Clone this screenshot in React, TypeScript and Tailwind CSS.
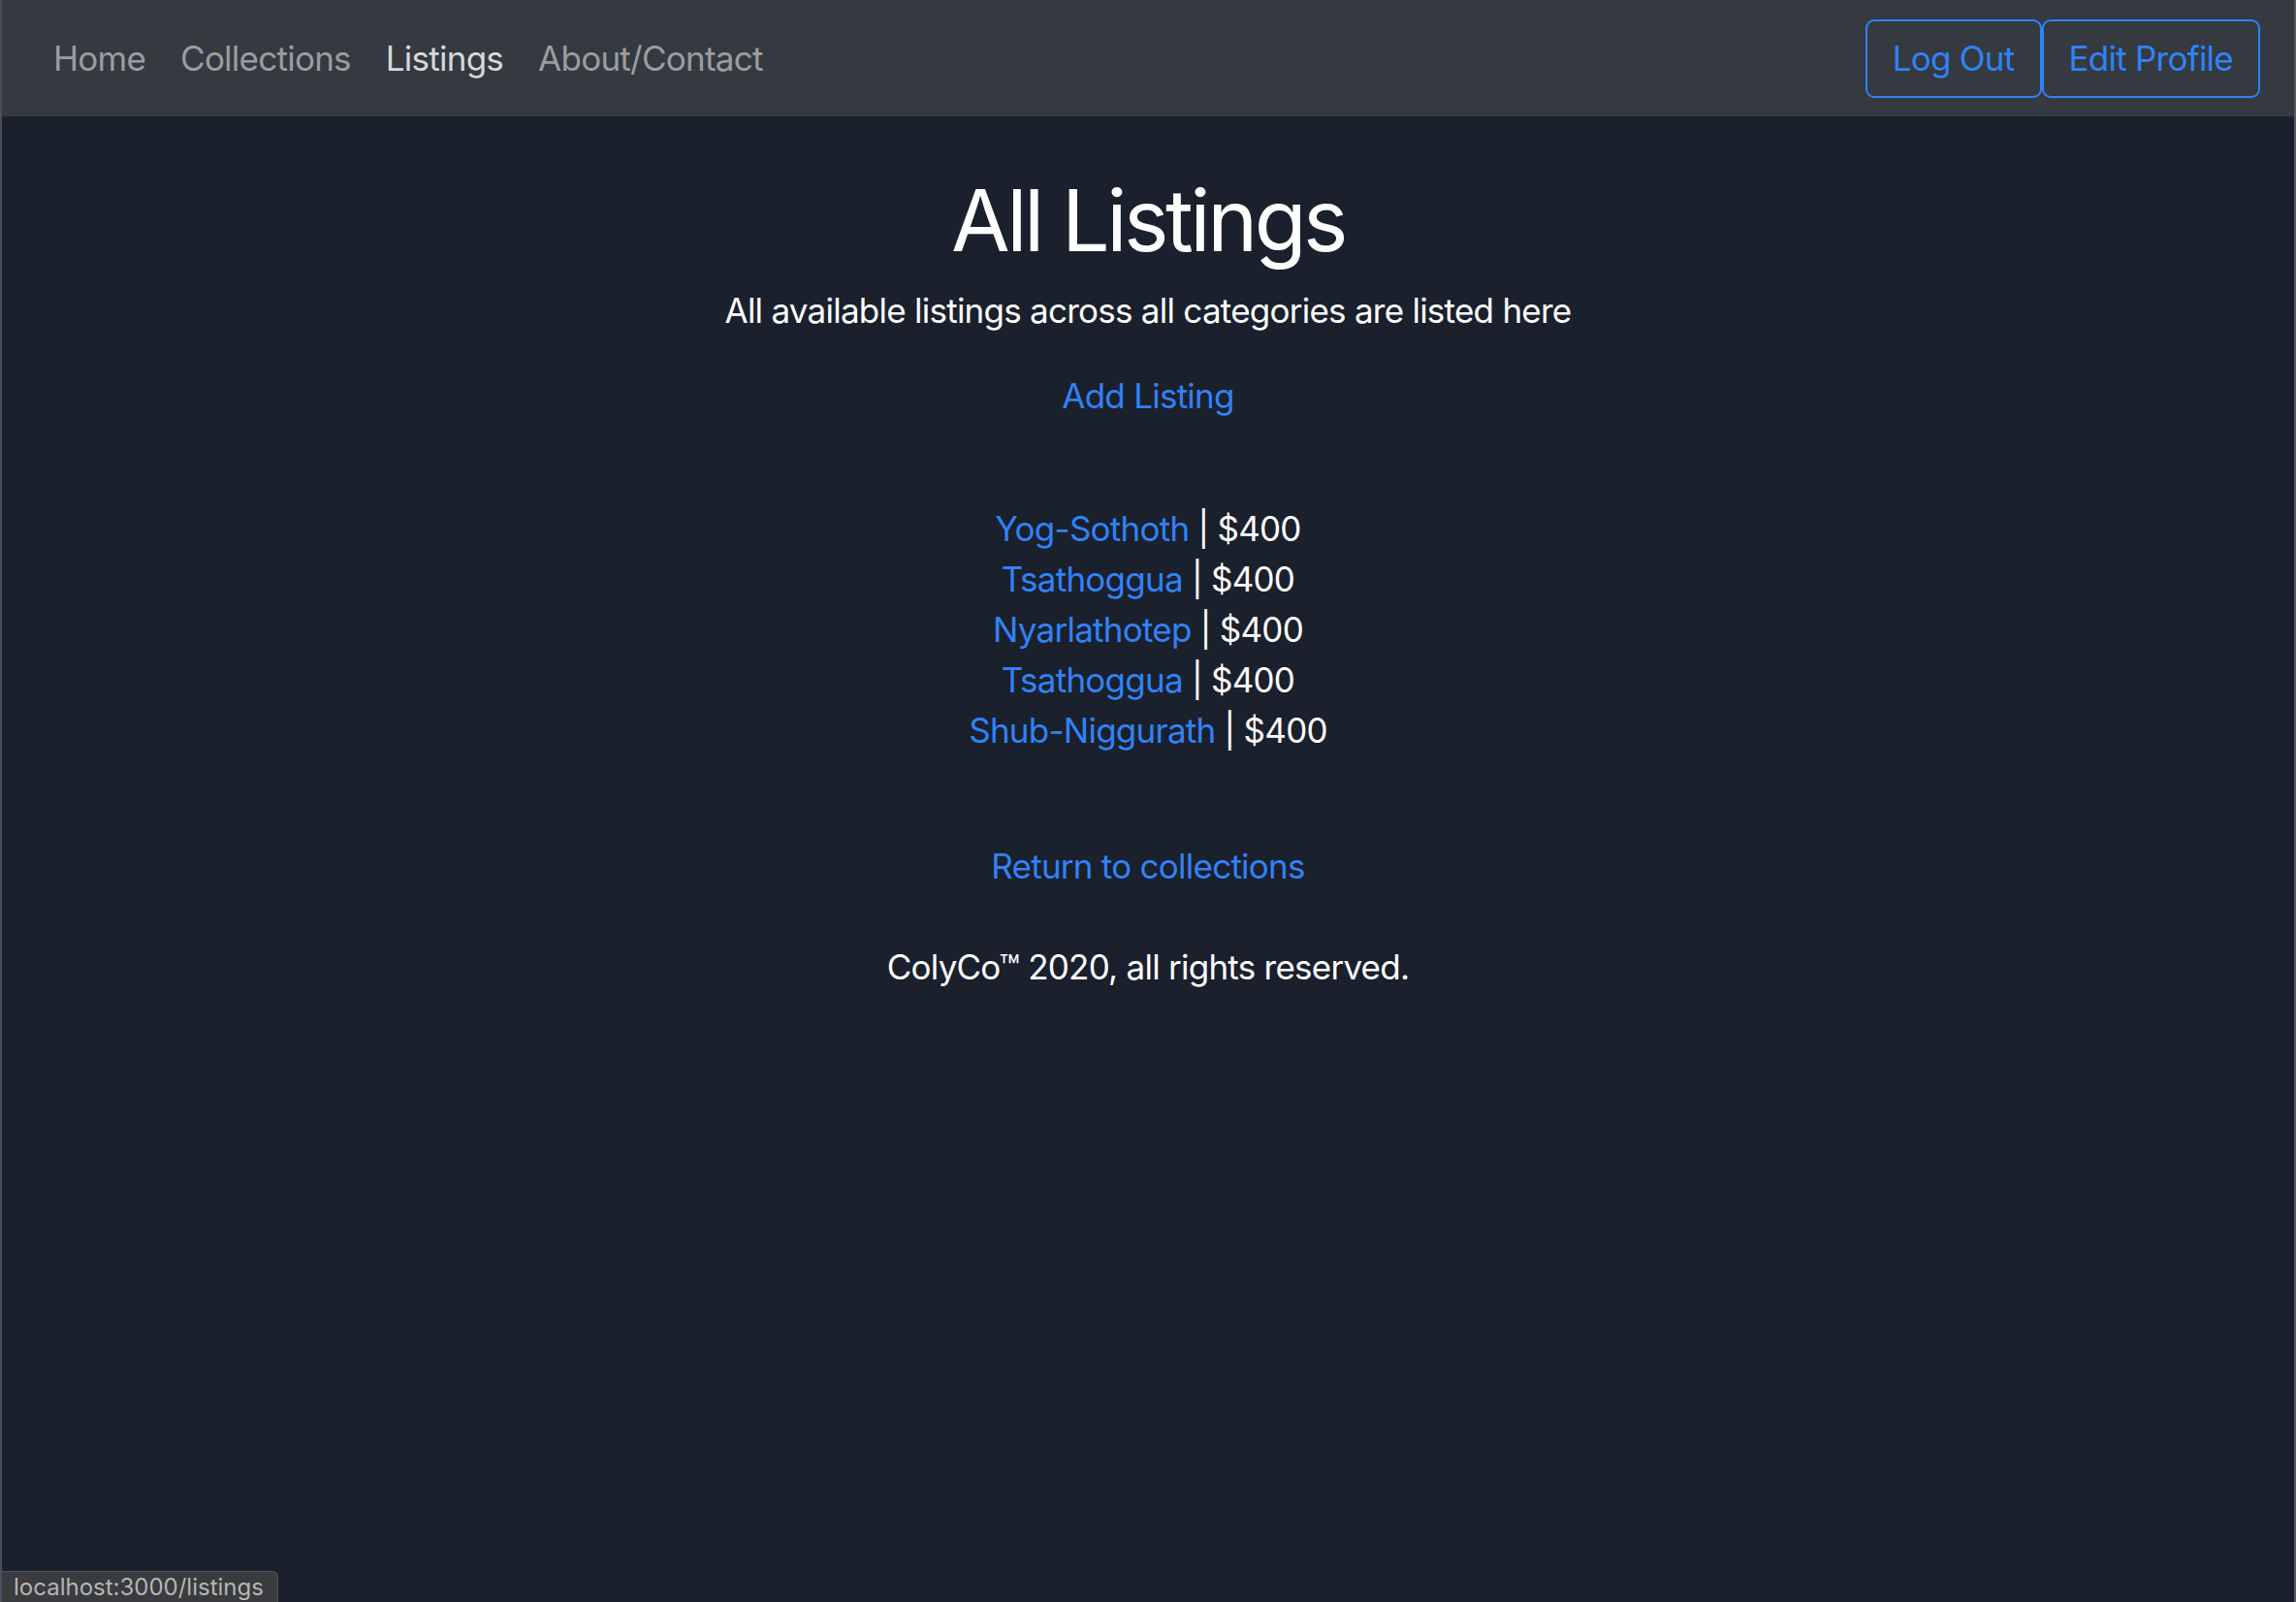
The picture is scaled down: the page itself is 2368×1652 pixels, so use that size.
import React from "react";

const listings = [
  { name: "Yog-Sothoth", price: 400 },
  { name: "Tsathoggua", price: 400 },
  { name: "Nyarlathotep", price: 400 },
  { name: "Tsathoggua", price: 400 },
  { name: "Shub-Niggurath", price: 400 },
];

const font = { fontFamily: "Inter, 'Noto Sans', 'Liberation Sans', sans-serif" };

function NavBar() {
  return (
    <nav className="flex h-[120px] items-center justify-between bg-[#343a40] px-[35px]">
      <div className="flex items-center text-[35px] leading-[53px]">
        <a className="px-[18px] text-[#9a9da1]">Home</a>
        <a className="px-[18px] text-[#9a9da1]">Collections</a>
        <a className="px-[18px] text-[#d7d8da]">Listings</a>
        <a className="px-[18px] text-[#9a9da1]">About/Contact</a>
      </div>
      <div className="flex items-center">
        <button className="h-[81px] rounded-[9px] border-2 border-[#3182f6] px-[26px] text-[35px] leading-[53px] tracking-[-0.75px] text-[#3182f6]">
          Log Out
        </button>
        <button className="h-[81px] rounded-[9px] border-2 border-[#3182f6] px-[26px] text-[35px] leading-[53px] tracking-[-0.75px] text-[#3182f6]">
          Edit Profile
        </button>
      </div>
    </nav>
  );
}

export default function App() {
  return (
    <div
      className="relative flex h-[1652px] flex-col overflow-hidden border-l-2 border-r-2 border-l-[#4b5058] border-r-[#56595e] bg-[#1a202c] tracking-[-0.75px] text-white"
      style={font}
    >
      <NavBar />

      {/* Main content */}
      <main className="flex flex-col items-center text-center">
        <h1 className="mt-[54px] text-[88px] font-normal leading-[106px] tracking-[-3.5px]">All Listings</h1>
        <p className="mt-[14px] text-[35px] leading-[53px]">
          All available listings across all categories are listed here
        </p>
        <a className="mt-[35px] text-[35px] leading-[53px] text-[#3182f6]">Add Listing</a>

        <ul className="mt-[84px] text-[35px] leading-[52px]">
          {listings.map((l, i) => (
            <li key={i}>
              <a className="text-[#3182f6]">{l.name}</a> | ${l.price}
            </li>
          ))}
        </ul>

        <a className="mt-[88px] text-[35px] leading-[53px] text-[#3182f6]">Return to collections</a>

        <footer className="mt-[51px] text-[35px] leading-[53px]">ColyCo™ 2020, all rights reserved.</footer>
      </main>

      {/* browser status bubble */}
      <div className="absolute bottom-0 left-0 rounded-tr-[6px] border-t border-r border-[#55575b] bg-[#3a3b3e] py-[2px] pl-[12px] pr-[14px] text-[24px] leading-[27px] tracking-normal text-[#b4b5b8]">
        localhost:3000/listings
      </div>
    </div>
  );
}
